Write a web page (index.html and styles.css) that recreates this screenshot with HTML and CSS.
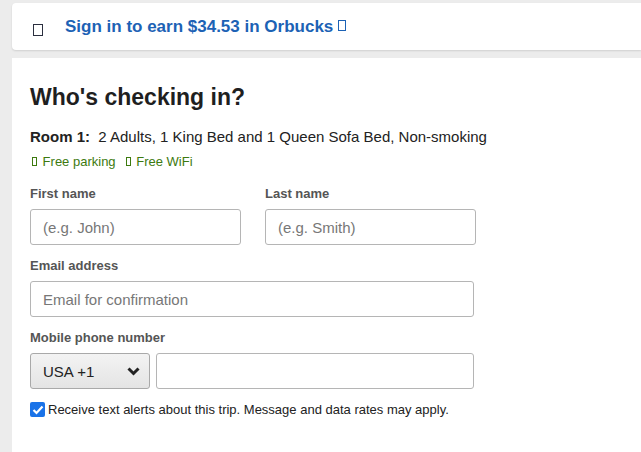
FILE: index.html
```html
<!DOCTYPE html>
<html lang="en">
<head>
  <meta charset="UTF-8" />
  <title>Who's checking in?</title>
  <link rel="stylesheet" href="styles.css">
</head>
<body>

  <!-- 登入提示 -->
  <div class="card signin">
    <span class="tofu tofu-dark"></span>
    <a href="#" class="signin-link">Sign in to earn $34.53 in Orbucks <span class="tofu tofu-blue"></span></a>
  </div>

  <!-- 旅客資料 -->
  <div class="card checkin">
    <h2>Who's checking in?</h2>
    <p class="room"><strong>Room 1:</strong>&nbsp; 2 Adults, 1 King Bed and 1 Queen Sofa Bed, Non-smoking</p>
    <div class="amenities">
      <span><span class="tofu tofu-green"></span> Free parking</span>
      <span><span class="tofu tofu-green"></span> Free WiFi</span>
    </div>

    <div class="row">
      <div class="field">
        <label>First name</label>
        <input type="text" class="input input-half" placeholder="(e.g. John)">
      </div>
      <div class="field">
        <label>Last name</label>
        <input type="text" class="input input-half" placeholder="(e.g. Smith)">
      </div>
    </div>

    <div class="field">
      <label>Email address</label>
      <input type="text" class="input input-full" placeholder="Email for confirmation">
    </div>

    <div class="field">
      <label>Mobile phone number</label>
      <div class="phone">
        <div class="select">
          <span>USA +1</span>
          <svg width="13" height="9" viewBox="0 0 13 9"><path d="M1.5 1.5 L6.5 6.5 L11.5 1.5" fill="none" stroke="#222" stroke-width="3"/></svg>
        </div>
        <input type="text" class="input input-phone">
      </div>
    </div>

    <label class="check">
      <span class="box"><svg width="12" height="10" viewBox="0 0 12 10"><path d="M1.5 5 L4.5 8 L10.5 1.5" fill="none" stroke="#fff" stroke-width="2.2"/></svg></span>
      Receive text alerts about this trip. Message and data rates may apply.
    </label>
  </div>

</body>
</html>
```

FILE: styles.css
```css
* {
  box-sizing: border-box;
}
body {
  margin: 0;
  padding: 3px 0 0 12px;
  background: #ececec;
  font-family: "Liberation Sans", Arial, sans-serif;
  color: #222;
}

/* 卡片 */
.card {
  background: #fff;
  border-radius: 4px 0 0 4px;
}
.signin {
  height: 47px;
  display: flex;
  align-items: center;
  padding-left: 21px;
  box-shadow: 0 1px 2px rgba(0, 0, 0, 0.12);
}
.signin-link {
  margin-left: 22px;
  color: #1c62b5;
  font-weight: 700;
  font-size: 17px;
  text-decoration: none;
}
.checkin {
  margin-top: 8px;
  padding: 26px 18px 30px;
  border-radius: 0;
  min-height: 400px;
}

/* 缺字方框 */
.tofu {
  display: inline-block;
  vertical-align: middle;
  border: 1px solid;
}
.tofu-dark {
  width: 10px;
  height: 12px;
  border-color: #2b2f3f;
  margin-top: 6px;
}
.tofu-blue {
  width: 8px;
  height: 11px;
  border-color: #1c62b5;
  margin-top: -3px;
}
.tofu-green {
  width: 5px;
  height: 9px;
  border-color: #3d7a0f;
  margin: -2px 2px 0 2px;
}

h2 {
  margin: 0 0 16px;
  font-size: 23px;
  color: #1f1f1f;
}
.room {
  margin: 0;
  font-size: 15px;
  line-height: 20px;
}
.amenities {
  margin-top: 7px;
  display: flex;
  gap: 8px;
  font-size: 13px;
  color: #3d7a0f;
}

/* 表單 */
.row {
  display: flex;
  gap: 24px;
}
.field {
  margin-top: 13px;
}
.row .field {
  margin-top: 17px;
}
.field label {
  display: block;
  font-size: 13px;
  font-weight: 700;
  color: #555;
  margin-bottom: 8px;
}
.input {
  height: 36px;
  border: 1px solid #b5b5b5;
  border-radius: 3px;
  padding: 0 12px;
  font-family: inherit;
  font-size: 15px;
  color: #222;
}
.input::placeholder {
  color: #777;
}
.input-half {
  width: 211px;
}
.input-full {
  width: 444px;
}
.phone {
  display: flex;
  gap: 6px;
}
.select {
  width: 120px;
  height: 36px;
  border: 1px solid #a9a9a9;
  border-radius: 3px;
  background: linear-gradient(#f3f3f3, #e4e4e4);
  display: flex;
  align-items: center;
  justify-content: space-between;
  padding: 0 9px 0 12px;
  font-size: 15px;
}
.input-phone {
  width: 318px;
}

.check {
  display: flex;
  align-items: center;
  gap: 3px;
  margin-top: 13px;
  font-size: 13px;
  color: #222;
}
.box {
  width: 15px;
  height: 15px;
  border-radius: 2px;
  background: #1a73e8;
  display: flex;
  align-items: center;
  justify-content: center;
}
```
